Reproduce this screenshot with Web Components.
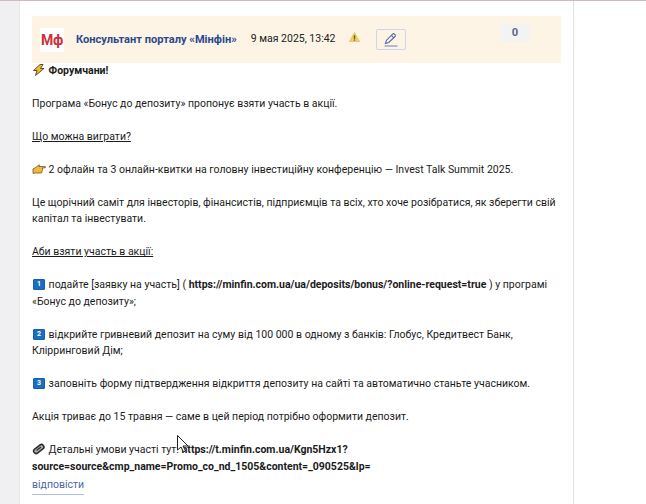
<!DOCTYPE html>
<html>
<head>
<meta charset="utf-8">
<title>Форум</title>
<style>
  html, body { margin: 0; height: 100%; background: #fff; overflow: hidden; }
  body { font-family: Roboto, "Liberation Sans", sans-serif; }
</style>
</head>
<body>
<forum-page>
  <forum-post>
    <post-header slot="header"
      author="Консультант порталу «Мінфін»"
      date="9 мая 2025, 13:42"
      votes="0"></post-header>
    <post-emoji name="bolt"></post-emoji> <b>Форумчани!</b><br><br>
    Програма «Бонус до депозиту» пропонує взяти участь в акції.<br><br>
    <u>Що можна виграти?</u><br><br>
    <post-emoji name="hand"></post-emoji> 2 офлайн та 3 онлайн-квитки на головну інвестиційну конференцію — Invest Talk Summit 2025.<br><br>
    Це щорічний саміт для інвесторів, фінансистів, підприємців та всіх, хто хоче розібратися, як зберегти свій капітал та інвестувати.<br><br>
    <u>Аби взяти участь в акції:</u><br><br>
    <post-emoji name="1"></post-emoji> подайте [заявку на участь] ( <b>https://minfin.com.ua/ua/deposits/bonus/?online-request=true</b> ) у програмі «Бонус до депозиту»;<br><br>
    <post-emoji name="2"></post-emoji> відкрийте гривневий депозит на суму від 100 000 в одному з банків: Глобус, Кредитвест Банк, Клірринговий Дім;<br><br>
    <post-emoji name="3"></post-emoji> заповніть форму підтвердження відкриття депозиту на сайті та автоматично станьте учасником.<br><br>
    Акція триває до 15 травня — саме в цей період потрібно оформити депозит.<br><br>
    <post-emoji name="clip"></post-emoji> Детальні умови участі тут: <b>https://t.minfin.com.ua/Kgn5Hzx1?source=source&amp;cmp_name=Promo_co_nd_1505&amp;content=_090525&amp;lp=</b>
    <reply-link slot="footer">відповісти</reply-link>
  </forum-post>
  <mouse-pointer></mouse-pointer>
</forum-page>

<script>
class ForumPage extends HTMLElement {
  constructor() {
    super();
    this.attachShadow({ mode: 'open' });
    this.shadowRoot.innerHTML = `
      <style>
        :host { display: block; position: relative; height: 504px; width: 646px; overflow: hidden;
          background: #fff; border-top: 1px solid #ceb9c4; box-sizing: border-box; }
        .wrap { display: flex; height: 100%; }
        .gutter { width: 19px; flex: none; background: #f0f0f3; }
        .col { width: 555px; flex: none; box-sizing: border-box; padding: 15px 12px 0 12px;
          border-left: 1px solid #e6e6e6; border-right: 1px solid #e2e2e2; background: #fff; }
      </style>
      <div class="wrap">
        <div class="gutter"></div>
        <div class="col"><slot></slot></div>
      </div>`;
  }
}

class ForumPost extends HTMLElement {
  constructor() {
    super();
    this.attachShadow({ mode: 'open' });
    this.shadowRoot.innerHTML = `
      <style>
        :host { display: block; color: #1b1b1b; font: 10.5px/16.5px Roboto, "Liberation Sans", sans-serif; }
        .text { width: 529px; margin-top: -0.25px; }
        .foot { margin-top: 1.5px; }
      </style>
      <slot name="header"></slot>
      <div class="text"><slot></slot></div>
      <div class="foot"><slot name="footer"></slot></div>`;
  }
}

class PostHeader extends HTMLElement {
  constructor() {
    super();
    this.attachShadow({ mode: 'open' });
  }
  connectedCallback() {
    this.shadowRoot.innerHTML = `
      <style>
        :host { display: flex; height: 47px; width: 529px; background: #fdf4e6; align-items: center;
          position: relative; box-sizing: border-box; padding-left: 8px; }
        .logo { width: 24px; height: 24px; background: #fff; border-radius: 2px; display: flex; flex: none;
          align-items: center; justify-content: center; color: #c8323c; font: 700 14px/24px Roboto, sans-serif; letter-spacing: -0.3px; }
        .author { margin-left: 12px; font: 700 11.1px/16px Roboto, sans-serif; color: #2b4a8c; white-space: nowrap; }
        .date { margin-left: 14px; font-size: 10.5px; color: #222; white-space: nowrap; }
        .warn { margin-left: 13px; width: 11px; height: 10px; flex: none; margin-top: -5px; }
        .edit { margin-left: 16px; width: 30px; height: 21px; box-sizing: border-box; border: 1px solid #cbd6ee;
          border-radius: 2px; display: flex; align-items: center; justify-content: center; background: transparent; padding: 0; }
        .votes { position: absolute; left: 468px; top: 8px; width: 30px; height: 18px; background: #f3f3f3;
          border-radius: 3px; text-align: center; font: 700 11.25px/18px Roboto, sans-serif; color: #5a6a85; }
      </style>
      <div class="logo">Мф</div>
      <div class="author">${this.getAttribute('author')}</div>
      <div class="date">${this.getAttribute('date')}</div>
      <svg class="warn" viewBox="0 0 12 11"><path d="M6 .5 11.6 10.5H.4z" fill="#f2d264" stroke="#e3bd55" stroke-width=".8" stroke-linejoin="round"/><rect x="5.2" y="3.6" width="1.6" height="4" fill="#6a5a30"/><rect x="5.2" y="8.2" width="1.6" height="1.4" fill="#6a5a30"/></svg>
      <button class="edit" aria-label="edit">
        <svg width="14" height="14" viewBox="0 0 14 14" fill="none" stroke="#5568a8" stroke-width="1.1"><path d="M1.5 10.5 2.5 7.2 8.6 1.1c.5-.5 1.3-.5 1.8 0l.6.6c.5.5.5 1.3 0 1.8L4.8 9.5z"/><path d="M7.4 2.4 9.8 4.8"/><path d="M.5 13h13" stroke="#7a89b8"/></svg>
      </button>
      <div class="votes">${this.getAttribute('votes')}</div>`;
  }
}

const EMOJI = {
  bolt: `<svg width="14" height="12" viewBox="0 0 14 12"><path d="M8 .5 1.5 6.500h3.500L3.500 11.500 12 4.500H8.500L11 .5z" fill="#f5b82e" stroke="#4a4030" stroke-width=".9" stroke-linejoin="round"/></svg>`,
  hand: `<svg width="14" height="11" viewBox="0 0 14 11"><path d="M1 5 4.500 3 6.500 1H7.500L7 2.500H13c.8 0 .8 1.400 0 1.400H10.500V5.500L9.500 9H3L1 9.500z" fill="#f0b93a" stroke="#5a4620" stroke-width=".7" stroke-linejoin="round"/></svg>`,
  clip: `<svg width="14" height="12" viewBox="0 0 14 12"><rect x="1" y="3.500" width="11.500" height="5" rx="2.500" transform="rotate(-38 6.750 6)" fill="#b5b5b5" stroke="#2c2c2c" stroke-width="1.600"/><path d="M4.500 7.500 9 4" stroke="#2c2c2c" stroke-width="1.200"/></svg>`
};

class PostEmoji extends HTMLElement {
  constructor() {
    super();
    this.attachShadow({ mode: 'open' });
  }
  connectedCallback() {
    const name = this.getAttribute('name');
    const body = EMOJI[name] || `<span class="key">${name}</span>`;
    this.shadowRoot.innerHTML = `
      <style>
        :host { display: inline-block; width: 14px; overflow: hidden; vertical-align: -2px; line-height: 0; }
        svg { display: block; }
        .key { display: block; width: 12px; height: 11px; box-sizing: border-box; margin-left: 1px; background: #1b6ec2;
          border: 1px solid #1660a8; color: #fff; border-radius: 1px;
          font: 700 7px/9px Roboto, sans-serif; text-align: center; }
      </style>${body}`;
  }
}

class ReplyLink extends HTMLElement {
  constructor() {
    super();
    this.attachShadow({ mode: 'open' });
    this.shadowRoot.innerHTML = `
      <style>
        :host { display: inline-block; color: #4b6aa8; font-size: 10.5px; line-height: 16px; border-bottom: 1px solid #aebde0; padding-bottom: 1px; }
      </style><slot></slot>`;
  }
}

class MousePointer extends HTMLElement {
  constructor() {
    super();
    this.attachShadow({ mode: 'open' });
    this.shadowRoot.innerHTML = `
      <style>:host { position: absolute; left: 177px; top: 434px; width: 14px; height: 20px; line-height: 0; }</style>
      <svg width="14" height="20" viewBox="0 0 14 20"><path d="M.5.5V15L4 12l2.5 5 2-1-2.5-5h5z" fill="#fff" stroke="#222" stroke-width="1"/></svg>`;
  }
}

customElements.define('forum-page', ForumPage);
customElements.define('forum-post', ForumPost);
customElements.define('post-header', PostHeader);
customElements.define('post-emoji', PostEmoji);
customElements.define('reply-link', ReplyLink);
customElements.define('mouse-pointer', MousePointer);
</script>
</body>
</html>
